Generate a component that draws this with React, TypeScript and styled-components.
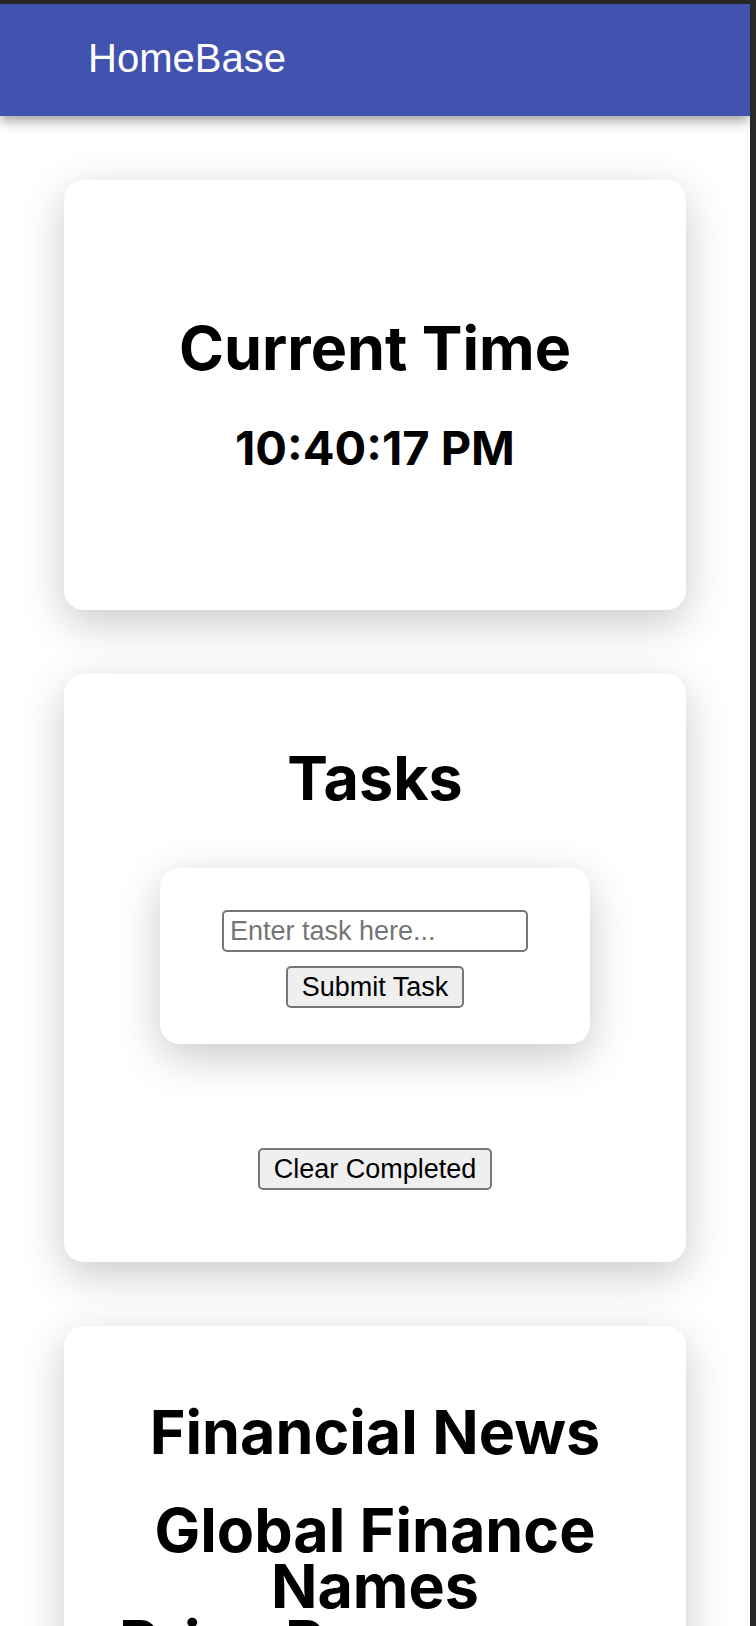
import React, { useState } from "react";
import styled, { createGlobalStyle } from "styled-components";

const GlobalStyle = createGlobalStyle`
  html, body, #root {
    height: 100%;
    margin: 0;
  }
  *, *::before, *::after {
    box-sizing: border-box;
  }
`;

const Frame = styled.div`
  height: 100%;
  overflow-x: hidden;
  overflow-y: auto;
  scrollbar-width: none;
  border-top: 4px solid #282828;
  border-right: 6px solid #282828;
  background: #fff;
  color: #000;
  font-family: Inter, sans-serif;
`;

const AppBar = styled.header`
  display: flex;
  align-items: center;
  height: 112px;
  padding: 0 88px 4px;
  background: #4253af;
  color: #fff;
  box-shadow:
    0 4px 8px -2px rgba(0, 0, 0, 0.2),
    0 8px 10px 0 rgba(0, 0, 0, 0.14),
    0 2px 20px 0 rgba(0, 0, 0, 0.12);
`;

const Brand = styled.span`
  font-family: "Liberation Sans", Arial, sans-serif;
  font-size: 40px;
  line-height: 48px;
`;

const Main = styled.main`
  display: flex;
  flex-direction: column;
  gap: 64px;
  padding: 64px;
`;

const Panel = styled.section`
  display: flex;
  flex-direction: column;
  align-items: center;
  border-radius: 20px;
  background: #fff;
  box-shadow: 0 13px 44px rgba(0, 0, 0, 0.21);
`;

const Card = styled(Panel)<{ $top: number; $bottom: number }>`
  padding: ${(p) => p.$top}px 48px ${(p) => p.$bottom}px;
`;

const Title = styled.h1`
  margin: 0;
  font-size: 61px;
  font-weight: 700;
  line-height: 56px;
  text-align: center;
`;

const Clock = styled.h2`
  margin: 44px 0 0;
  font-size: 47px;
  font-weight: 700;
  line-height: 56px;
`;

const TaskForm = styled(Panel).attrs({ as: "form" })`
  gap: 14px;
  margin: 62px 0 104px;
  padding: 42px 62px 36px;
`;

const TaskInput = styled.input`
  width: 306px;
  height: 42px;
  padding: 2px 6px;
  border: 2px solid #767676;
  border-radius: 5px;
  background: #fff;
  font: 27px "Liberation Sans", Arial, sans-serif;
  &::placeholder {
    color: #757575;
  }
`;

const Button = styled.button`
  height: 42px;
  padding: 0 14px;
  border: 2px solid #767676;
  border-radius: 5px;
  background: #efefef;
  color: #000;
  font: 27px "Liberation Sans", Arial, sans-serif;
`;

const Headline = styled(Title).attrs({ as: "h2" })`
  margin-top: 42px;
`;

const Line = styled.span`
  display: block;
`;

export default function App() {
  const [task, setTask] = useState("");
  return (
    <>
      <GlobalStyle />
      <Frame>
        <AppBar>
          <Brand>HomeBase</Brand>
        </AppBar>
        <Main>
          <Card $top={140} $bottom={134}>
            <Title>Current Time</Title>
            <Clock>10:40:17 PM</Clock>
          </Card>
          <Card $top={76} $bottom={72}>
            <Title>Tasks</Title>
            <TaskForm onSubmit={(e: React.FormEvent) => e.preventDefault()}>
              <TaskInput
                aria-label="Task"
                placeholder="Enter task here..."
                value={task}
                onChange={(e) => setTask(e.target.value)}
              />
              <Button type="submit">Submit Task</Button>
            </TaskForm>
            <Button type="button">Clear Completed</Button>
          </Card>
          <Card $top={78} $bottom={76}>
            <Title>Financial News</Title>
            <Headline>
              <Line>Global Finance</Line>
              <Line>Names</Line>
              <Line>Prize Programme</Line>
            </Headline>
          </Card>
        </Main>
      </Frame>
    </>
  );
}
